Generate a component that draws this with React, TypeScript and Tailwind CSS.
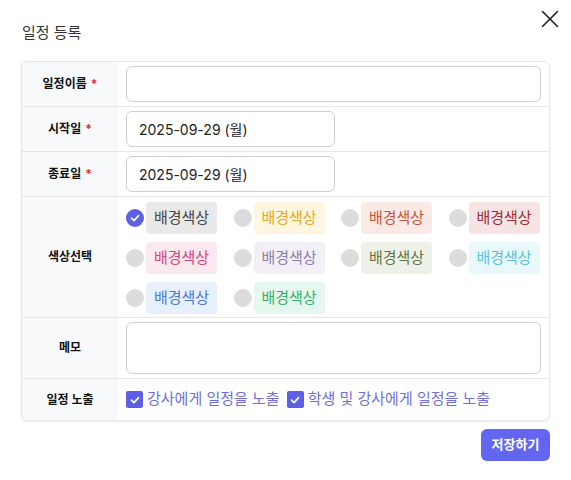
import { X } from "lucide-react";

const chips = [
  { bg: "bg-[#e9e9e9]", text: "text-[#444444]", checked: true },
  { bg: "bg-[#fdf6e0]", text: "text-[#eaa623]" },
  { bg: "bg-[#fbe9e5]", text: "text-[#c8553a]" },
  { bg: "bg-[#f6e4e4]", text: "text-[#9b2c35]" },
  { bg: "bg-[#fce8ef]", text: "text-[#d6457a]" },
  { bg: "bg-[#f2eff7]", text: "text-[#8a7fab]" },
  { bg: "bg-[#eef1e8]", text: "text-[#5f7445]" },
  { bg: "bg-[#e9f8fb]", text: "text-[#5cc1d8]" },
  { bg: "bg-[#e8f0fd]", text: "text-[#4a78d6]" },
  { bg: "bg-[#e6f7ef]", text: "text-[#2fb36c]" },
];

const Check = ({ size = 12 }: { size?: number }) => (
  <svg width={size} height={size} viewBox="0 0 12 12" fill="none">
    <path d="M2.5 6.2 L5 8.6 L9.6 3.6" stroke="white" strokeWidth="1.6" strokeLinecap="round" strokeLinejoin="round" />
  </svg>
);

const Row = ({ label, required, children, className = "" }: { label: string; required?: boolean; children: React.ReactNode; className?: string }) => (
  <div className={`flex border-b border-[#e6e6e6] last:border-b-0 ${className}`}>
    <div className="w-[96px] shrink-0 bg-[#f8f9fb] flex items-center justify-center text-[12px] font-bold text-[#111]">
      {label}
      {required && <span className="text-[#e03131] ml-[4px]">*</span>}
    </div>
    <div className="flex-1 px-[8px]">{children}</div>
  </div>
);

export default function App() {
  return (
    <div className="w-[571px] h-[480px] bg-white relative" style={{ fontFamily: '"Inter", "Noto Sans CJK KR", sans-serif' }}>
      <button className="absolute left-[535px] top-[4px] text-[#222]">
        <X size={30} strokeWidth={1.3} />
      </button>
      <div className="pt-[22px] px-[21px]">
        <h1 className="text-[15px] text-[#333] leading-[22px] pl-[1px]">일정 등록</h1>
        <div className="mt-[17px] border border-[#e6e6e6] rounded-[6px] shadow-[0_1px_2px_rgba(0,0,0,0.08)] overflow-hidden">
          <Row label="일정이름" required className="h-[45px]">
            <div className="pt-[4px]">
              <div className="h-[36px] border border-[#cfcfcf] rounded-[6px]" />
            </div>
          </Row>
          <Row label="시작일" required className="h-[45px]">
            <div className="pt-[4px]">
              <div className="w-[209px] h-[36px] border border-[#cfcfcf] rounded-[6px] flex items-center px-[12px] text-[14px] text-[#222]">2025-09-29 (월)</div>
            </div>
          </Row>
          <Row label="종료일" required className="h-[45px]">
            <div className="pt-[4px]">
              <div className="w-[209px] h-[36px] border border-[#cfcfcf] rounded-[6px] flex items-center px-[12px] text-[14px] text-[#222]">2025-09-29 (월)</div>
            </div>
          </Row>
          <Row label="색상선택" className="h-[121px]">
            <div className="grid grid-cols-[repeat(4,91px)] gap-x-[16.5px] gap-y-[8px] pt-[5px]">
              {chips.map((c, i) => (
                <div key={i} className="flex items-center gap-[2px] h-[32px]">
                  {c.checked ? (
                    <span className="w-[18px] h-[18px] rounded-full bg-[#5f5fe6] flex items-center justify-center">
                      <Check />
                    </span>
                  ) : (
                    <span className="w-[18px] h-[18px] rounded-full bg-[#dcdcdc]" />
                  )}
                  <span className={`w-[71px] h-[32px] rounded-[4px] flex items-center justify-center text-[15px] ${c.bg} ${c.text}`}>배경색상</span>
                </div>
              ))}
            </div>
          </Row>
          <Row label="메모" className="h-[61px]">
            <div className="pt-[4px]">
              <div className="h-[52px] border border-[#cfcfcf] rounded-[6px]" />
            </div>
          </Row>
          <Row label="일정 노출" className="h-[41px]">
            <div className="h-full flex items-center gap-[7px] text-[15px] text-[#6d6fe0]">
              <span className="flex items-center gap-[4px]">
                <span className="w-[17px] h-[17px] rounded-[2px] bg-[#5f5fe6] flex items-center justify-center">
                  <Check />
                </span>
                강사에게 일정을 노출
              </span>
              <span className="flex items-center gap-[4px]">
                <span className="w-[17px] h-[17px] rounded-[2px] bg-[#5f5fe6] flex items-center justify-center">
                  <Check />
                </span>
                학생 및 강사에게 일정을 노출
              </span>
            </div>
          </Row>
        </div>
        <div className="flex justify-end mt-[8px]">
          <button className="w-[69px] h-[32px] rounded-[6px] bg-[#6366f1] text-white text-[13px] font-bold">저장하기</button>
        </div>
      </div>
    </div>
  );
}
